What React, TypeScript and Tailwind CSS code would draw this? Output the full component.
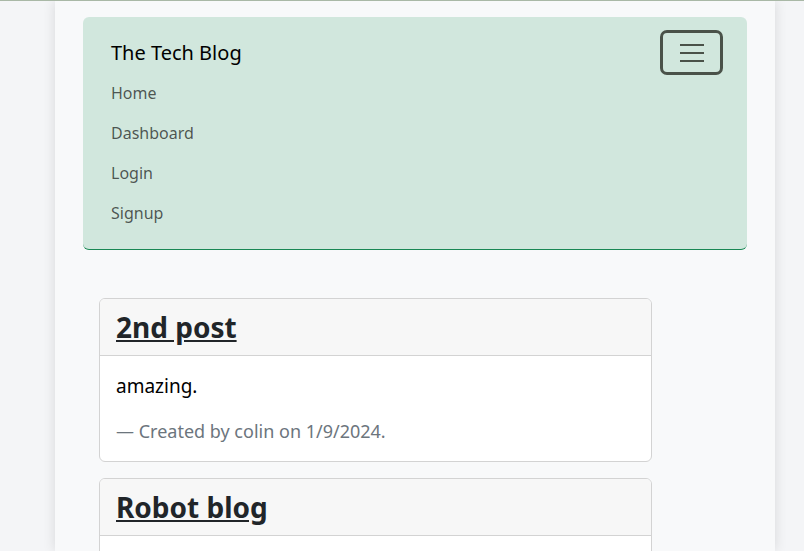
import React from 'react';

type Post = { title: string; body?: string; author?: string; date?: string };

// second card is cut off by the frame, so only its header shows
const posts: Post[] = [
  { title: '2nd post', body: 'amazing.', author: 'colin', date: '1/9/2024' },
  { title: 'Robot blog' },
];

const navLinks = ['Home', 'Dashboard', 'Login', 'Signup'];

const PostCard: React.FC<{ post: Post }> = ({ post }) => (
  <div className="mb-4 rounded-[6px] border border-[#d3d3d3] bg-white overflow-hidden">
    <div className="h-[57px] border-b border-[#d3d3d3] bg-[#f7f7f7] px-4 flex items-center">
      <a href="#" className="text-[28px] font-bold text-[#212529] underline leading-none">
        {post.title}
      </a>
    </div>
    <div className="px-4 pt-[17px] pb-[17px] min-h-[60px]">
      {post.body && (
        <>
          <p className="text-[19px] text-black leading-[26px]">{post.body}</p>
          <p className="mt-[19px] text-[18px] text-[#6c757d] leading-[26px]">
            — Created by {post.author} on {post.date}.
          </p>
        </>
      )}
    </div>
  </div>
);

const App: React.FC = () => {
  return (
    <div
      className="h-[551px] bg-[#f4f5f7] border-t border-[#a9b8a6] overflow-hidden"
      style={{ fontFamily: '"Noto Sans", "Open Sans", sans-serif' }}
    >
      <div className="ml-[55px] w-[720px] h-[550px] overflow-hidden bg-[#f8f9fa] shadow-[0_0_12px_rgba(0,0,0,0.12)] px-[28px] pt-[16px]">
        <nav className="rounded-[6px] bg-[#d1e7dd] border-b border-[#198754] pl-[28px] pr-[24px] pt-[13px] pb-[16px]">
          <div className="flex items-start justify-between">
            <span className="mt-[8px] text-[20px] text-black leading-[30px]">The Tech Blog</span>
            <button className="w-[63px] h-[45px] rounded-[7px] border-[3px] border-[#4a5249] flex items-center justify-center">
              <svg width="26" height="20" viewBox="0 0 26 20">
                <path d="M1 2h24M1 10h24M1 18h24" stroke="#4a5249" strokeWidth="2" />
              </svg>
            </button>
          </div>
          <ul className="mt-[-2px]">
            {navLinks.map((l) => (
              <li key={l} className="h-[40px] flex items-center">
                <a href="#" className="text-[16px] text-black/65">
                  {l}
                </a>
              </li>
            ))}
          </ul>
        </nav>
        <main className="mt-[48px] pl-[16px] w-[569px]">
          {posts.map((p) => (
            <PostCard key={p.title} post={p} />
          ))}
        </main>
      </div>
    </div>
  );
};

export default App;
